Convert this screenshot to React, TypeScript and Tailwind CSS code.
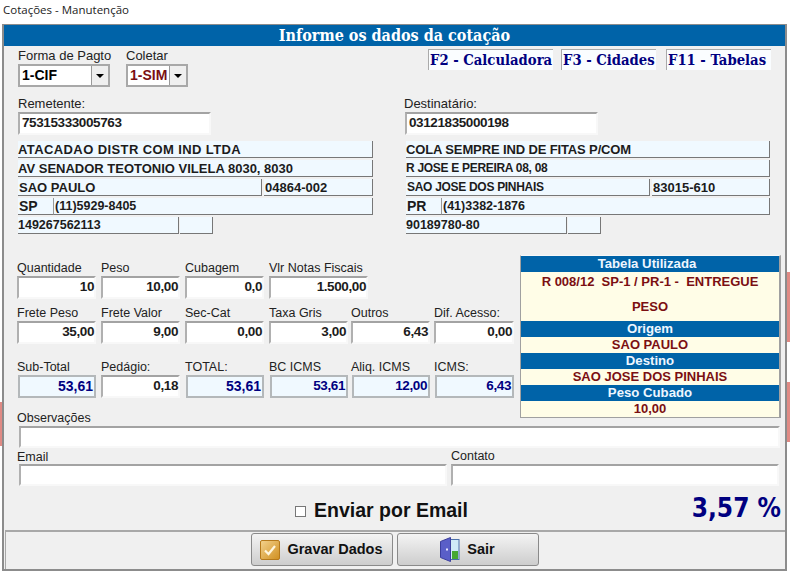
import { ReactNode } from "react";

const navy = "text-[#000080]";
const maroon = "text-[#7b0f12]";

function Label({ children, className = "", size = "text-[12.5px]" }: { children: ReactNode; className?: string; size?: string }) {
  return <div className={`h-[15px] leading-[14px] text-[#222] whitespace-nowrap ${size} ${className}`}>{children}</div>;
}

// sunken white edit box
function Edit({ value, className = "", right = false }: { value?: string; className?: string; right?: boolean }) {
  return (
    <div
      className={`flex items-center border-t-2 border-l-2 border-t-[#a3a3a3] border-l-[#b0b0b0] border-r-2 border-b-2 border-r-[#f8f8f8] border-b-[#f8f8f8] bg-white text-[13.5px] font-bold tracking-[-0.4px] text-[#1c1c1c] ${
        right ? "justify-end" : "pl-[2px]"
      } ${className}`}
    >
      {value}
    </div>
  );
}

// read only value on the client block
function Info({ value, className = "" }: { value?: string; className?: string }) {
  return (
    <div className={`flex h-[17px] items-center border-r border-b border-r-[#777] border-b-[#777] bg-[#f0f9ff] font-bold leading-none text-[#1c1c1c] whitespace-nowrap ${className}`}>
      {value}
    </div>
  );
}

function NumberField({ label, value, className = "w-[79px]" }: { label: string; value: string; className?: string }) {
  return (
    <div className={className}>
      <Label>{label}</Label>
      <Edit value={value} right className="h-[23px] w-full" />
    </div>
  );
}

function TotalField({ label, value, className = "w-[78px]", big = false }: { label: string; value: string; className?: string; big?: boolean }) {
  return (
    <div className={className}>
      <Label className="-ml-[1px]">{label}</Label>
      <div className={`flex h-[23px] w-full items-center justify-end border-2 border-[#b4b8ba] bg-[#f0f9ff] pr-[1px] font-bold ${big ? "text-[14px]" : "text-[13.5px] tracking-[-0.4px]"} ${navy}`}>
        {value}
      </div>
    </div>
  );
}

function Combo({ value, className, textClass = "" }: { value: string; className: string; textClass?: string }) {
  return (
    <div className={`flex h-[23px] items-stretch border-2 border-[#a8a8a8] bg-white ${className}`}>
      <div className={`flex-1 pl-[2px] text-[14px] font-bold leading-[19px] ${textClass}`}>{value}</div>
      <div className="flex w-[17px] items-center justify-center border-l border-l-[#999] bg-[#efefef]">
        <div className="h-0 w-0 border-x-[4px] border-t-[4px] border-x-transparent border-t-black" />
      </div>
    </div>
  );
}

function Party(props: {
  label: string;
  doc: string;
  name: string;
  address: string;
  city: string;
  zip: string;
  uf: string;
  phone: string;
  ie: string;
  className: string;
  labelClass?: string;
  rowsClass?: string;
  nameClass: string;
  addressClass: string;
  cityClass: string;
}) {
  return (
    <div className={props.className}>
      <Label size="text-[13px]" className={props.labelClass}>{props.label}</Label>
      <Edit value={props.doc} className="h-[23px] w-[193px]" />
      <div className={`mt-[6px] flex flex-col gap-[2px] ${props.rowsClass ?? ""}`}>
        <Info value={props.name} className={props.nameClass} />
        <Info value={props.address} className={props.addressClass} />
        <div className="flex gap-[2px]">
          <Info value={props.city} className={`w-[244px] pl-[1px] ${props.cityClass}`} />
          <Info value={props.zip} className="flex-1 pl-[1px] text-[13px]" />
        </div>
        <div className="flex">
          <Info value={props.uf} className="w-[36px] border-r-[#999] pl-[1px] text-[14px]" />
          <Info value={props.phone} className="flex-1 pl-[1px] text-[12.5px]" />
        </div>
        <div className="flex gap-[1px]">
          <Info value={props.ie} className="w-[161px] text-[12.5px]" />
          <Info className="w-[33px]" />
        </div>
      </div>
    </div>
  );
}

function PanelHead({ children, className = "" }: { children: ReactNode; className?: string }) {
  return <div className={`h-[16px] bg-[#0063a8] text-center text-[13.2px] font-bold leading-[16px] text-[#eef6ff] ${className}`}>{children}</div>;
}

function PanelValue({ children }: { children: ReactNode }) {
  return <div className={`h-[16px] text-center text-[13px] font-bold leading-[16px] ${maroon}`}>{children}</div>;
}

function CheckIcon() {
  return (
    <svg width="20" height="20" viewBox="0 0 20 20">
      <defs>
        <linearGradient id="gold" x1="0" y1="0" x2="1" y2="1">
          <stop offset="0" stopColor="#f3d28e" />
          <stop offset="1" stopColor="#d08f1f" />
        </linearGradient>
      </defs>
      <rect x="0.5" y="0.5" width="19" height="19" rx="1.5" fill="url(#gold)" stroke="#b67a1c" />
      <path d="M5 10.5l3.5 3.5 6.5-8" fill="none" stroke="#fff6df" strokeWidth="2.2" />
    </svg>
  );
}

function DoorIcon() {
  return (
    <svg width="20" height="25" viewBox="0 0 20 25">
      <rect x="8" y="2.5" width="11" height="20" fill="#cfeaf7" stroke="#4a6fa8" />
      <rect x="12" y="14" width="6" height="8" fill="#46a832" />
      <path d="M0.5 4.5L10.5 0.5V24.5L0.5 20.5Z" fill="#5a5fc8" stroke="#3c3f9e" />
      <rect x="6" y="11.5" width="2" height="2" fill="#e8e8ff" />
    </svg>
  );
}

function ActionButton({ children }: { children: ReactNode }) {
  return (
    <div className="flex h-[33px] w-[142px] items-center justify-center gap-[7px] rounded-[3px] border border-[#8a8a8a] bg-gradient-to-b from-[#f4f4f4] to-[#cdcdcd] text-[14.5px] font-bold text-[#111]">
      {children}
    </div>
  );
}

export default function App() {
  return (
    <div className="relative h-[573px] w-[790px] overflow-hidden bg-white font-['Liberation_Sans',Arial,sans-serif]">
      {/* bits of the desktop showing round the window */}
      <div className="absolute right-0 top-[272px] h-[70px] w-[3px] bg-[#e08a84]" />
      <div className="absolute right-0 top-[382px] h-[60px] w-[3px] bg-[#e08a84]" />
      <div className="absolute left-0 top-[402px] h-[44px] w-[2px] bg-[#e08a84]" />

      <div className="h-[24px] pl-[3px] pt-[1px] font-['Open_Sans',sans-serif] text-[11.5px] leading-[17px] text-[#222]">Cotações - Manutenção</div>

      <div className="relative ml-[2px] flex h-[547px] w-[785px] flex-col border-x-2 border-b-2 border-t border-[#8c8c8c] bg-[#f0f0f0]">
        <div className="h-[21px] bg-[#0063a8] text-center font-['DejaVu_Serif_Condensed','DejaVu_Serif',serif] text-[16px] font-bold leading-[21px] text-white">
          Informe os dados da cotação
        </div>

        <div className="flex pl-[14px] pt-[3px]">
          <div className="w-[108px]">
            <Label size="text-[13px]">Forma de Pagto</Label>
            <Combo value="1-CIF" className="w-[92px]" />
          </div>
          <div>
            <Label size="text-[13px]">Coletar</Label>
            <Combo value="1-SIM" className="w-[62px]" textClass={maroon} />
          </div>
          <div className={`ml-[240px] flex h-[21px] gap-[8px] font-['DejaVu_Serif_Condensed','DejaVu_Serif',serif] text-[14.7px] font-bold leading-[20px] ${navy}`}>
            <div className="w-[125px] whitespace-nowrap border-l border-t border-[#aaa] bg-[#fafdff] pl-[1px]">F2 - Calculadora</div>
            <div className="w-[95px] whitespace-nowrap border-l border-t border-[#aaa] bg-[#fafdff] pl-[1px]">F3 - Cidades</div>
            <div className="ml-[2px] w-[105px] whitespace-nowrap border-l border-t border-[#aaa] bg-[#fafdff] pl-[1px]">F11 - Tabelas</div>
          </div>
        </div>

        <div className="mt-[10px] flex pl-[14px]">
          <Party
            className="w-[355px]"
            label="Remetente:"
            doc="75315333005763"
            name="ATACADAO DISTR COM IND LTDA"
            address="AV SENADOR TEOTONIO VILELA 8030, 8030"
            city="SAO PAULO"
            zip="04864-002"
            uf="SP"
            phone="(11)5929-8405"
            ie="149267562113"
            nameClass="text-[13px] tracking-[0.4px]"
            addressClass="text-[13px]"
            cityClass="text-[13px]"
          />
          <Party
            className="ml-[32px] w-[365px]"
            labelClass="-ml-[1px]"
            rowsClass="ml-[1px]"
            label="Destinatário:"
            doc="03121835000198"
            name="COLA SEMPRE IND DE FITAS P/COM"
            address="R JOSE E PEREIRA 08, 08"
            city="SAO JOSE DOS PINHAIS"
            zip="83015-610"
            uf="PR"
            phone="(41)3382-1876"
            ie="90189780-80"
            nameClass="text-[13px] tracking-[-0.13px]"
            addressClass="text-[12px] tracking-[-0.3px]"
            cityClass="text-[12px] tracking-[-0.3px]"
          />
        </div>

        <div className="mt-[21px] flex pl-[13px]">
          <div className="w-[503px] pt-[6px]">
            <div className="flex gap-[5px]">
              <NumberField label="Quantidade" value="10" />
              <NumberField label="Peso" value="10,00" />
              <NumberField label="Cubagem" value="0,0" />
              <NumberField label="Vlr Notas Fiscais" value="1.500,00" className="w-[99px]" />
            </div>
            <div className="mt-[7px] flex gap-[3px]">
              <NumberField label="Frete Peso" value="35,00" className="mr-[2px] w-[79px]" />
              <NumberField label="Frete Valor" value="9,00" className="mr-[2px] w-[79px]" />
              <NumberField label="Sec-Cat" value="0,00" className="mr-[2px] w-[79px]" />
              <NumberField label="Taxa Gris" value="3,00" />
              <NumberField label="Outros" value="6,43" className="mr-[1px] w-[79px]" />
              <NumberField label="Dif. Acesso:" value="0,00" className="w-[80px]" />
            </div>
            <div className="mt-[16px] flex gap-[4px]">
              <TotalField label="Sub-Total" value="53,61" big className="ml-[1px] w-[78px]" />
              <NumberField label="Pedágio:" value="0,18" className="ml-[1px] w-[79px]" />
              <TotalField label="TOTAL:" value="53,61" big className="ml-[2px] w-[78px]" />
              <TotalField label="BC ICMS" value="53,61" className="ml-[2px] w-[78px]" />
              <TotalField label="Aliq. ICMS" value="12,00" />
              <TotalField label="ICMS:" value="6,43" className="ml-[1px] w-[79px]" />
            </div>
            <Label className="mt-[13px]">Observações</Label>
          </div>
          <div className="h-[163px] w-[261px] self-start border-l border-b border-r-2 border-[#a0a0a0] border-t border-t-[#f8f8f8] bg-[#fffde7]">
            <PanelHead className="pr-[6px]">Tabela Utilizada</PanelHead>
            <div className={`h-[49px] text-center text-[13px] font-bold whitespace-pre ${maroon}`}>
              <div className="h-[20px] leading-[20px]">R 008/12  SP-1 / PR-1 -  ENTREGUE</div>
              <div className="h-[29px] leading-[29px]">PESO</div>
            </div>
            <PanelHead>Origem</PanelHead>
            <PanelValue>SAO PAULO</PanelValue>
            <PanelHead>Destino</PanelHead>
            <PanelValue>SAO JOSE DOS PINHAIS</PanelValue>
            <PanelHead>Peso Cubado</PanelHead>
            <PanelValue>10,00</PanelValue>
          </div>
        </div>

        <Edit className="ml-[15px] h-[22px] w-[761px]" />

        <div className="mt-[1px] flex pl-[13px]">
          <div className="mr-[4px]">
            <Label className="pt-[1px]">Email</Label>
            <Edit className="ml-[2px] h-[22px] w-[428px]" />
          </div>
          <div>
            <Label>Contato</Label>
            <Edit className="h-[22px] w-[328px]" />
          </div>
        </div>

        <div className="relative mt-[10px] flex h-[30px] items-center justify-center pr-[26px]">
          <div className="mr-[8px] h-[11px] w-[11px] border border-[#777] bg-white" />
          <span className="text-[19.5px] font-bold text-[#111]">Enviar por Email</span>
          <span className={`absolute right-[4px] top-[-3px] font-['DejaVu_Sans_Condensed','DejaVu_Sans',sans-serif] text-[26px] font-bold leading-[30px] ${navy}`}>3,57 %</span>
        </div>

        <div className="mt-[4px] ml-[1px] flex flex-1 justify-center gap-[4px] border-t-2 border-l border-[#a8a8a8] pr-[2px] pt-[1px]">
          <ActionButton>
            <CheckIcon />
            Gravar Dados
          </ActionButton>
          <ActionButton>
            <DoorIcon />
            Sair
          </ActionButton>
        </div>
      </div>
    </div>
  );
}
